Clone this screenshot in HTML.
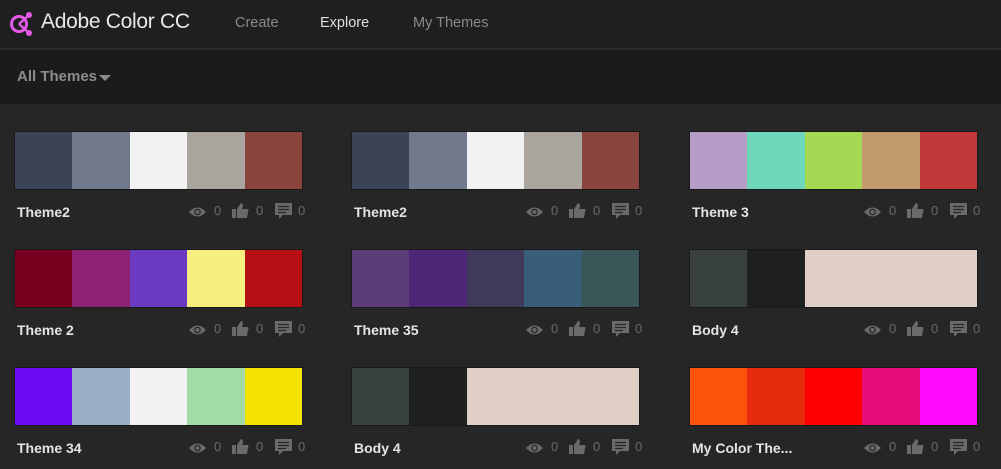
<!DOCTYPE html>
<html><head><meta charset="utf-8"><style>
*{margin:0;padding:0;box-sizing:border-box}
body{width:1001px;height:469px;overflow:hidden;background:#262626;font-family:"Liberation Sans",sans-serif;position:relative}
.hdr{position:absolute;left:0;top:0;width:1001px;height:49px;background:#1f1f1f;border-bottom:1px solid #2c2c2c}
.sub{position:absolute;left:0;top:50px;width:1001px;height:54px;background:#1b1b1b}
.logo{position:absolute;left:8px;top:9px}
.brand{position:absolute;left:41px;top:10px;font-size:21px;color:#e8e8e8;letter-spacing:-0.3px}
.nav{position:absolute;top:15px;font-size:14.5px;color:#8a8a8a}
.all{position:absolute;left:17px;top:68px;font-size:15px;font-weight:bold;color:#8c8c8c}
.tri{position:absolute;left:99px;top:75px;width:0;height:0;border-left:6px solid transparent;border-right:6px solid transparent;border-top:6px solid #8c8c8c}
.card{position:absolute;width:289px;height:100px}
.pal{position:absolute;left:0;top:0;width:289px;height:59px;border:1px solid #1a1a1a;display:flex}
.pal div{height:100%}
.t{position:absolute;left:3px;top:73px;font-size:14px;font-weight:bold;color:#e4e4e4}
.st{position:absolute;top:72px;font-size:13px;color:#6a6a6a}
.ic{position:absolute}
</style></head><body>
<div class="hdr"></div>
<svg class="logo" width="28" height="30" viewBox="0 0 28 30"><circle cx="11" cy="15" r="7.5" fill="none" stroke="#e35ae6" stroke-width="3"/><path d="M11 15 L21 6 M11 15 L21 24" stroke="#e35ae6" stroke-width="2.5"/><circle cx="21" cy="6" r="3" fill="#e35ae6"/><circle cx="21" cy="24" r="3" fill="#e35ae6"/></svg>
<div class="brand">Adobe Color CC</div>
<div class="nav" style="left:235px">Create</div>
<div class="nav" style="left:320px;color:#e0e0e0">Explore</div>
<div class="nav" style="left:413px">My Themes</div>
<div class="sub"></div>
<div class="all">All Themes</div><div class="tri"></div>

<svg width="0" height="0" style="position:absolute"><defs>
<g id="eye"><path d="M0 6 Q8.5 -3 17 6 Q8.5 15 0 6Z" fill="#6a6a6a"/><circle cx="8.5" cy="6" r="3.3" fill="#262626"/><circle cx="8.5" cy="6" r="2" fill="#6a6a6a"/></g>
<g id="thumb"><rect x="0" y="6" width="4" height="9" fill="#6a6a6a"/><path d="M5 6 L9 0 Q11 0 11 3 L10 6 L16 6 Q17 7 16 9 L15 15 L5 15Z" fill="#6a6a6a"/></g>
<g id="cmt"><path d="M0 0 H17 V12 H8 L4 16 V12 H0Z" fill="#6a6a6a"/><path d="M3 3.5H14M3 6.5H14M3 9.5H11" stroke="#262626" stroke-width="1.3"/></g>
</defs></svg>

<div class="card" style="left:14px;top:131px"><div class="pal"><div style="flex:1;background:#3a4456"></div><div style="flex:1;background:#707a8b"></div><div style="flex:1;background:#f2f2f2"></div><div style="flex:1;background:#aaa59f"></div><div style="flex:1;background:#89443d"></div></div><div class="t">Theme2</div>
<svg class="ic" style="left:175px;top:75px" width="17" height="12"><use href="#eye"/></svg><span class="st" style="left:200px">0</span>
<svg class="ic" style="left:218px;top:72px" width="17" height="16"><use href="#thumb"/></svg><span class="st" style="left:242px">0</span>
<svg class="ic" style="left:261px;top:72px" width="17" height="17"><use href="#cmt"/></svg><span class="st" style="left:284px">0</span></div>

<div class="card" style="left:351px;top:131px"><div class="pal"><div style="flex:1;background:#3a4456"></div><div style="flex:1;background:#707a8b"></div><div style="flex:1;background:#f2f2f2"></div><div style="flex:1;background:#aaa59f"></div><div style="flex:1;background:#89443d"></div></div><div class="t">Theme2</div>
<svg class="ic" style="left:175px;top:75px" width="17" height="12"><use href="#eye"/></svg><span class="st" style="left:200px">0</span>
<svg class="ic" style="left:218px;top:72px" width="17" height="16"><use href="#thumb"/></svg><span class="st" style="left:242px">0</span>
<svg class="ic" style="left:261px;top:72px" width="17" height="17"><use href="#cmt"/></svg><span class="st" style="left:284px">0</span></div>

<div class="card" style="left:689px;top:131px"><div class="pal"><div style="flex:1;background:#b59cc6"></div><div style="flex:1;background:#6fd8bb"></div><div style="flex:1;background:#a5d954"></div><div style="flex:1;background:#c19a6d"></div><div style="flex:1;background:#c1393a"></div></div><div class="t">Theme 3</div>
<svg class="ic" style="left:175px;top:75px" width="17" height="12"><use href="#eye"/></svg><span class="st" style="left:200px">0</span>
<svg class="ic" style="left:218px;top:72px" width="17" height="16"><use href="#thumb"/></svg><span class="st" style="left:242px">0</span>
<svg class="ic" style="left:261px;top:72px" width="17" height="17"><use href="#cmt"/></svg><span class="st" style="left:284px">0</span></div>

<div class="card" style="left:14px;top:249px"><div class="pal"><div style="flex:1;background:#770020"></div><div style="flex:1;background:#8c2271"></div><div style="flex:1;background:#6a3bc1"></div><div style="flex:1;background:#f4ef7e"></div><div style="flex:1;background:#b60f15"></div></div><div class="t">Theme 2</div>
<svg class="ic" style="left:175px;top:75px" width="17" height="12"><use href="#eye"/></svg><span class="st" style="left:200px">0</span>
<svg class="ic" style="left:218px;top:72px" width="17" height="16"><use href="#thumb"/></svg><span class="st" style="left:242px">0</span>
<svg class="ic" style="left:261px;top:72px" width="17" height="17"><use href="#cmt"/></svg><span class="st" style="left:284px">0</span></div>

<div class="card" style="left:351px;top:249px"><div class="pal"><div style="flex:1;background:#5c3d77"></div><div style="flex:1;background:#4b2775"></div><div style="flex:1;background:#41395a"></div><div style="flex:1;background:#385e78"></div><div style="flex:1;background:#3a5659"></div></div><div class="t">Theme 35</div>
<svg class="ic" style="left:175px;top:75px" width="17" height="12"><use href="#eye"/></svg><span class="st" style="left:200px">0</span>
<svg class="ic" style="left:218px;top:72px" width="17" height="16"><use href="#thumb"/></svg><span class="st" style="left:242px">0</span>
<svg class="ic" style="left:261px;top:72px" width="17" height="17"><use href="#cmt"/></svg><span class="st" style="left:284px">0</span></div>

<div class="card" style="left:689px;top:249px"><div class="pal"><div style="flex:1;background:#39413c"></div><div style="flex:1;background:#1f2020"></div><div style="flex:3;background:#e0cfc4"></div></div><div class="t">Body 4</div>
<svg class="ic" style="left:175px;top:75px" width="17" height="12"><use href="#eye"/></svg><span class="st" style="left:200px">0</span>
<svg class="ic" style="left:218px;top:72px" width="17" height="16"><use href="#thumb"/></svg><span class="st" style="left:242px">0</span>
<svg class="ic" style="left:261px;top:72px" width="17" height="17"><use href="#cmt"/></svg><span class="st" style="left:284px">0</span></div>

<div class="card" style="left:14px;top:367px"><div class="pal"><div style="flex:1;background:#6d0af5"></div><div style="flex:1;background:#98afc5"></div><div style="flex:1;background:#f2f2f2"></div><div style="flex:1;background:#a3dba7"></div><div style="flex:1;background:#f4e305"></div></div><div class="t">Theme 34</div>
<svg class="ic" style="left:175px;top:75px" width="17" height="12"><use href="#eye"/></svg><span class="st" style="left:200px">0</span>
<svg class="ic" style="left:218px;top:72px" width="17" height="16"><use href="#thumb"/></svg><span class="st" style="left:242px">0</span>
<svg class="ic" style="left:261px;top:72px" width="17" height="17"><use href="#cmt"/></svg><span class="st" style="left:284px">0</span></div>

<div class="card" style="left:351px;top:367px"><div class="pal"><div style="flex:1;background:#39413c"></div><div style="flex:1;background:#1f2020"></div><div style="flex:3;background:#e0cfc4"></div></div><div class="t">Body 4</div>
<svg class="ic" style="left:175px;top:75px" width="17" height="12"><use href="#eye"/></svg><span class="st" style="left:200px">0</span>
<svg class="ic" style="left:218px;top:72px" width="17" height="16"><use href="#thumb"/></svg><span class="st" style="left:242px">0</span>
<svg class="ic" style="left:261px;top:72px" width="17" height="17"><use href="#cmt"/></svg><span class="st" style="left:284px">0</span></div>

<div class="card" style="left:689px;top:367px"><div class="pal"><div style="flex:1;background:#fd520b"></div><div style="flex:1;background:#e72c0e"></div><div style="flex:1;background:#fe0000"></div><div style="flex:1;background:#e70d78"></div><div style="flex:1;background:#fe0bfc"></div></div><div class="t">My Color The...</div>
<svg class="ic" style="left:175px;top:75px" width="17" height="12"><use href="#eye"/></svg><span class="st" style="left:200px">0</span>
<svg class="ic" style="left:218px;top:72px" width="17" height="16"><use href="#thumb"/></svg><span class="st" style="left:242px">0</span>
<svg class="ic" style="left:261px;top:72px" width="17" height="17"><use href="#cmt"/></svg><span class="st" style="left:284px">0</span></div>
</body></html>
